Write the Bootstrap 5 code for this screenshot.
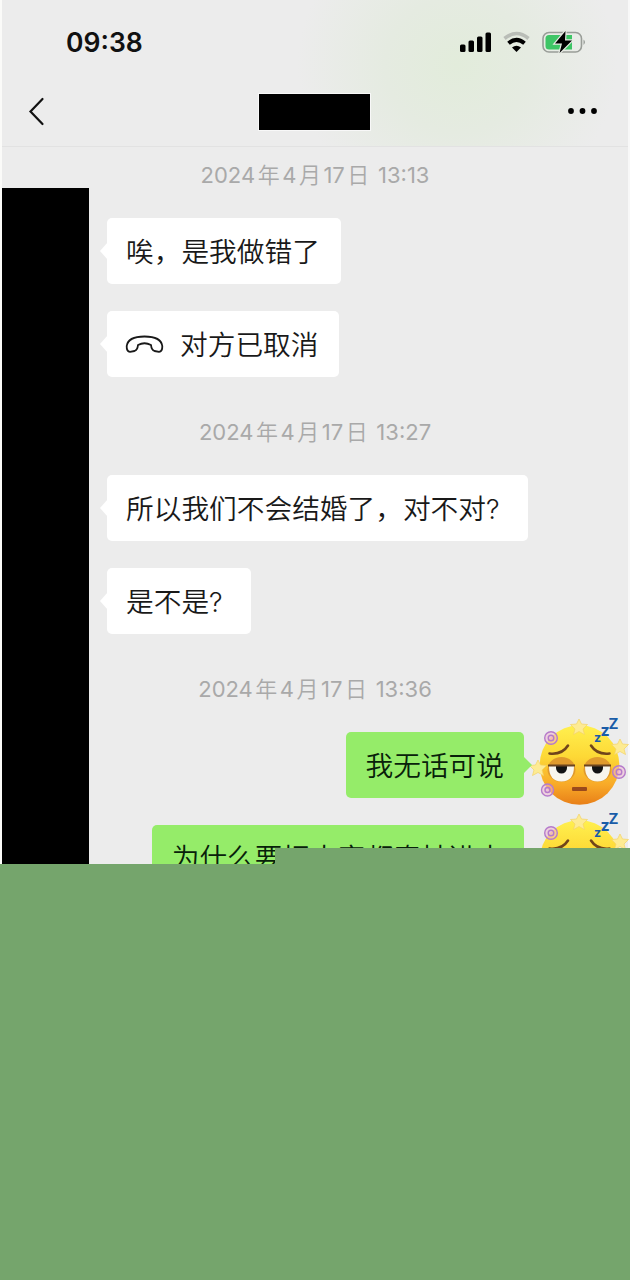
<!DOCTYPE html>
<html lang="zh-CN">
<head>
<meta charset="utf-8">
<meta name="viewport" content="width=device-width, initial-scale=1">
<title>聊天</title>
<link href="https://cdn.jsdelivr.net/npm/bootstrap@5.3.0/dist/css/bootstrap.min.css" rel="stylesheet">
<style>
  body { background: #75a56c; font-family: Inter, "Noto Sans CJK SC", sans-serif; color: #191919; }
  .phone { width: 630px; height: 864px; background: linear-gradient(to left, #f8f8f8 2px, #ececec 2px); border-left: 2px solid #fbfbf9; }
  .top-area { height: 147px; margin-right: 2px; border-bottom: 1px solid #e2e2e2; background: radial-gradient(ellipse 160px 150px at 455px 65px, #e2ecdb 0, #e5ebe1 45%, #ececec 100%); }
  .status { height: 84px; padding: 0 41px 0 64px; }
  .clock { font-size: 26.5px; font-weight: 600; line-height: 1; color: #111; }
  .title-row { height: 62px; padding: 1px 29px 8px 25px; }
  .name-block { width: 111px; height: 36px; margin-left: 15px; background: #000; box-shadow: 0 0 0 1px #f8f8f8; }
  .title-row svg { margin-top: -1px; }
  .side { width: 87px; height: 676px; margin-top: 41px; background: #000; }
  .log { width: 541px; }
  .stamp { margin-left: -89px; height: 24px; line-height: 24px; font-size: 22px; color: #a9a9a9; white-space: nowrap; }
  .stamp span { margin: 0 2.5px; font-weight: 350; }
  .bubble { position: relative; height: 66px; border-radius: 5px; background: #fff; padding: 0 20px 0 19px; font-family: "Noto Sans CJK SC", sans-serif; font-weight: 350; font-size: 27.7px; line-height: 65px; white-space: nowrap; }
  .bubble::before { content: ""; position: absolute; left: -7px; top: 24px; border: solid transparent; border-width: 9px 8px 9px 0; border-right-color: #fff; }
  .mine { padding-left: 20px; background: #95ec69; color: #08210a; }
  .mine::before { left: auto; right: -8px; border-width: 9px 0 9px 9px; border-left-color: #95ec69; }
  .q { display: inline-block; width: 22px; font-family: Inter, sans-serif; font-weight: 350; font-size: 27px; line-height: 1; }
  .face { width: 96px; height: 97px; overflow: visible; }
  .cover-strip { position: absolute; left: 273px; top: 848px; width: 356px; height: 16px; background: #75a56c; }
</style>
</head>
<body>
<main class="phone position-relative overflow-hidden">
  <header class="top-area">
    <div class="status d-flex align-items-center justify-content-between">
      <span class="clock">09:38</span>
      <svg width="128" height="26" viewBox="0 0 128 26">
        <g fill="#000"><rect x="1" y="15.500" width="5.500" height="7.500" rx="1.500"/><rect x="9.500" y="11.500" width="5.500" height="11.500" rx="1.500"/><rect x="18" y="7.500" width="5.500" height="15.500" rx="1.500"/><rect x="26.500" y="3.500" width="5.500" height="19.500" rx="1.500"/></g>
        <path d="M45.500 9.500Q57.500 -.500 69.500 9.500" fill="none" stroke="#b9bdb7" stroke-width="3.600"/>
        <path d="M49.500 14.200Q57.500 7.500 65.500 14.200" fill="none" stroke="#000" stroke-width="4"/>
        <path d="M53 18.500Q57.500 15 62 18.500L57.500 23Z"/>
        <rect x="84" y="3.500" width="38.500" height="19.500" rx="6" fill="none" stroke="#999d98" stroke-width="1.600"/>
        <path d="M90 6h23v14.500H90q-3.500 0-3.500-3.500V9.500Q86.500 6 90 6Z" fill="#3ec566"/>
        <path d="M124.500 10.500q3 2.500 0 5.500Z" fill="#999d98"/>
        <path d="M106.500 2 96 14.500h7L100.500 24l12.500-12.500h-7Z" fill="#000" stroke="#e7ebe4" stroke-width="2.400" paint-order="stroke"/>
      </svg>
    </div>
    <div class="title-row d-flex align-items-center justify-content-between">
      <svg width="20" height="30" viewBox="0 0 20 30"><path d="M15.500 3 3.500 15.500l12 12.500" fill="none" stroke="#111" stroke-width="2.200" stroke-linecap="round"/></svg>
      <div class="name-block"></div>
      <svg width="32" height="8" viewBox="0 0 32 8"><circle cx="4" cy="4" r="2.900"/><circle cx="15.500" cy="4" r="2.900"/><circle cx="27" cy="4" r="2.900"/></svg>
    </div>
  </header>
  <div class="d-flex">
    <div class="side flex-shrink-0"></div>
    <section class="log d-flex flex-column flex-shrink-0">
      <div class="stamp text-center" style="margin-top:16px">2024<span>年</span>4<span>月</span>17<span>日</span> 13:13</div>
      <div class="bubble align-self-start" style="margin:31px 0 0 18px;padding-right:21px">唉，是我做错了</div>
      <div class="bubble align-self-start d-flex" style="margin:27px 0 0 18px;padding-right:21px">
        <svg class="align-self-center" width="39" height="24" viewBox="0 0 39 24" style="margin:0 16px 0 -1px"><path d="M13 13Q19.500 9.500 26 13Q26.500 18 29.500 19L34 19.800Q37.500 19.500 37.300 14Q36 4.500 19.500 4.500T1.700 14Q1.500 19.500 5 19.800L9.500 19Q12.500 18 13 13Z" fill="none" stroke="#191919" stroke-width="1.800" stroke-linejoin="round"/></svg><span>对方已取消</span>
      </div>
      <div class="stamp text-center" style="margin-top:43px">2024<span>年</span>4<span>月</span>17<span>日</span> 13:27</div>
      <div class="bubble align-self-start" style="margin:31px 0 0 18px">所以我们不会结婚了，对不对<span class="q">?</span></div>
      <div class="bubble align-self-start" style="margin:27px 0 0 18px">是不是<span class="q">?</span></div>
      <div class="stamp text-center" style="margin-top:43px">2024<span>年</span>4<span>月</span>17<span>日</span> 13:36</div>
      <div class="d-flex justify-content-end" style="margin-top:15px;height:95px">
        <div class="bubble mine" style="margin:16px 10px 0 0">我无话可说</div>
        <svg class="face" viewBox="0 -1 96 97">
          <defs>
            <linearGradient id="skin" x1="0" y1="0" x2="0" y2="1"><stop offset="0" stop-color="#fff04f"/><stop offset=".4" stop-color="#fdd835"/><stop offset=".75" stop-color="#f8a928"/><stop offset="1" stop-color="#e87f18"/></linearGradient>
            <g id="sleepy">
              <circle cx="45.500" cy="48" r="39.800" fill="url(#skin)"/>
              <g fill="#fdeb93" stroke="#f3d365" stroke-width=".7"><path id="st" d="m45 2 2.500 5 6 .500-4.500 4.500 1.500 5.500-5.500-3-5.500 3 1.500-5.500-4.500-4.500 6-.500Z"/><use href="#st" x="-41" y="41"/><use href="#st" x="41" y="20"/></g>
              <g fill="#efb3cf" fill-opacity=".5" stroke="#b57bcb" stroke-width="1.400"><circle cx="17" cy="21" r="6.300"/><circle cx="17" cy="21" r="2.800"/><circle cx="13.500" cy="73" r="6"/><circle cx="13.500" cy="73" r="2.500"/><circle cx="85" cy="55" r="6.300"/><circle cx="85" cy="55" r="2.800"/></g>
              <path d="M15.500 36.500Q28 38 34 28.500M57 28.500Q63 38 75.500 36.500" fill="none" stroke="#70451b" stroke-width="2.600" stroke-linecap="round"/>
              <ellipse cx="27.500" cy="52.500" rx="14" ry="12.500" fill="#e09a2d"/><ellipse cx="63.500" cy="52.500" rx="14" ry="12.500" fill="#e09a2d"/>
              <path d="M15 49H40Q40 64.500 27.500 64.500T15 49ZM51 49H76Q76 64.500 63.500 64.500T51 49Z" fill="#f8f6ee"/>
              <path d="M22 49h11v2a5.500 5.500 0 0 1-11 0ZM58 49h11v2a5.500 5.500 0 0 1-11 0Z" fill="#141414"/>
              <path d="M14 48.500H41M50 48.500H77" stroke="#6b4520" stroke-width="1.800"/>
              <rect x="38" y="70" width="15" height="4" rx="1" fill="#9a4a1c"/>
              <g fill="#195ca8" font-family="Inter, sans-serif" font-weight="700"><text x="60" y="24.500" font-size="12.500">z</text><text x="66.500" y="18.500" font-size="16">z</text><text x="74.500" y="11.500" font-size="15">Z</text></g>
            </g>
          </defs>
          <use href="#sleepy"/>
        </svg>
      </div>
      <div class="d-flex justify-content-end" style="height:96px">
        <div class="bubble mine" style="margin:14px 10px 0 0;line-height:63px">为什么要把大家都牵扯进去</div>
        <svg class="face" viewBox="0 -1 96 97"><use href="#sleepy"/></svg>
      </div>
    </section>
  </div>
  <div class="cover-strip"></div>
</main>
<script src="https://cdn.jsdelivr.net/npm/bootstrap@5.3.0/dist/js/bootstrap.bundle.min.js"></script>
</body>
</html>
